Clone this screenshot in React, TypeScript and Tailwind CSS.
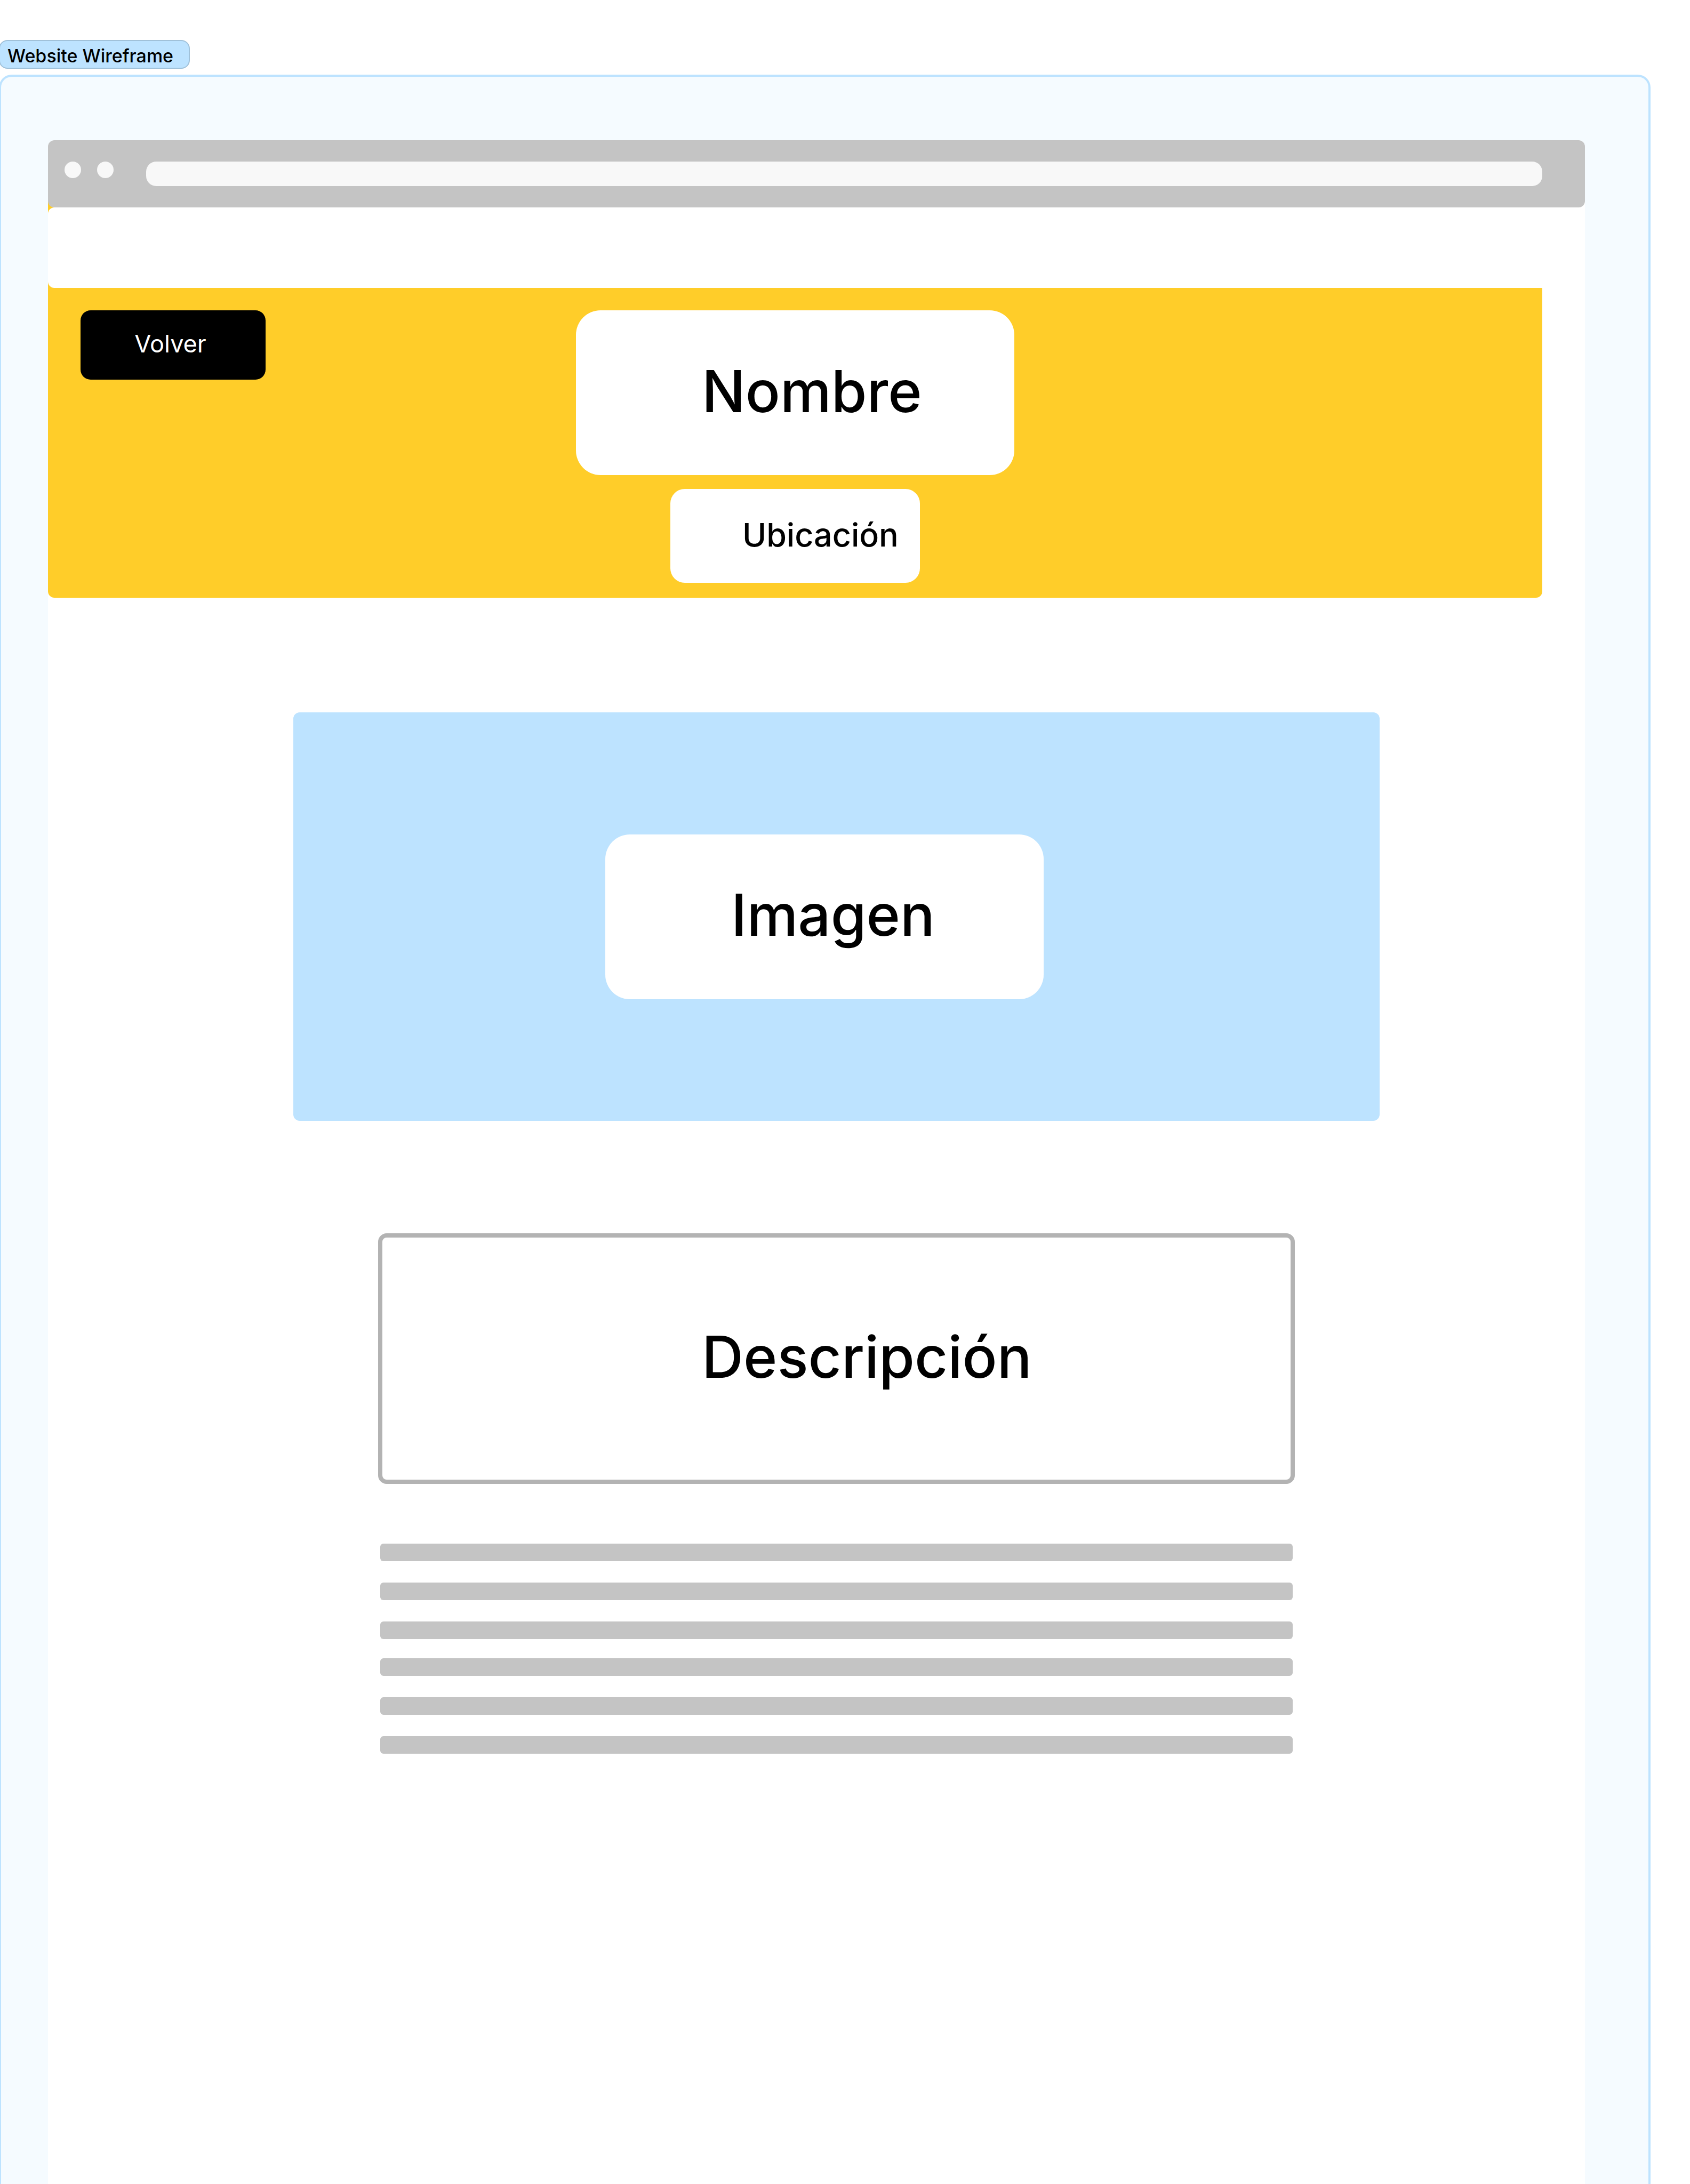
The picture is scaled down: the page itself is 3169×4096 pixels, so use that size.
const paragraphs = [
  [0, 1, 2],
  [3, 4, 5],
];

function BrowserBar() {
  return (
    <div className="relative z-10 flex h-[126px] items-start rounded-xl bg-[#c4c4c4] pt-10 pr-20 pl-[31px]">
      <span className="mr-[30px] size-[31px] shrink-0 rounded-full bg-[#f8f8f8]" />
      <span className="mr-[61px] size-[31px] shrink-0 rounded-full bg-[#f8f8f8]" />
      <input
        type="text"
        aria-label="Dirección"
        className="h-[46px] min-w-0 flex-1 rounded-[19px] bg-[#f8f8f8] px-6 text-2xl outline-none"
      />
    </div>
  );
}

function TitleCard({ children }: { children: string }) {
  return (
    <div className="flex h-[309px] w-[822px] items-center rounded-[46px] bg-white pb-1.5 pl-[236px]">
      <h2 className="text-[108px] leading-[132px] font-medium">{children}</h2>
    </div>
  );
}

function Hero() {
  return (
    <header className="-mt-3 mr-20 rounded-b-xl bg-[#ffcd29] pt-3">
      <div className="h-[151px] rounded-l-xl bg-white" />
      <div className="grid grid-cols-[1fr_auto_1fr] items-start px-[61px] pt-[42px] pb-7">
        <button
          type="button"
          className="flex h-[130px] w-[347px] items-center justify-center rounded-[19px] bg-black pr-2.5 pb-1 text-[45px] leading-[56px] text-white"
        >
          Volver
        </button>
        <div className="flex flex-col items-center gap-[26px]">
          <TitleCard>Nombre</TitleCard>
          <div className="flex h-[176px] w-[468px] items-center rounded-[27px] bg-white pb-1 pl-[135px]">
            <p className="text-[61px] leading-[76px] font-medium">Ubicación</p>
          </div>
        </div>
      </div>
    </header>
  );
}

export default function App() {
  return (
    <main className="flex min-h-screen flex-col overflow-x-hidden bg-white pt-[75px] font-['Inter',sans-serif] text-black">
      <div className="-ml-0.5 flex h-[54px] w-[358px] items-center rounded-2xl border-2 border-[#a0c1d9] bg-[#bde3ff] pt-1.5 pl-3.5">
        <h1 className="text-[34px] leading-[42px] font-medium whitespace-nowrap">Website Wireframe</h1>
      </div>

      <div className="mt-[11px] mr-[74px] -ml-0.5 flex flex-1 flex-col rounded-t-3xl border-4 border-b-0 border-[#bde3ff] bg-[#f5fbff] pt-[119px] pr-[119px] pl-[88px]">
        <div className="flex-1 rounded-t-xl bg-white">
          <BrowserBar />
          <Hero />

          <section className="mt-[215px] mr-[385px] ml-[460px] flex h-[766px] items-center rounded-xl bg-[#bde3ff] pl-[585px]">
            <TitleCard>Imagen</TitleCard>
          </section>

          <section className="mt-[211px] mr-[544px] ml-[619px]">
            <div className="flex h-[470px] items-center rounded-2xl border-8 border-[#b3b3b3] pb-1.5 pl-[599px]">
              <h2 className="text-[108px] leading-[132px] font-medium">Descripción</h2>
            </div>
            <div className="mx-1 mt-28 flex flex-col gap-9">
              {paragraphs.map((lines) => (
                <div key={lines[0]} className="flex flex-col gap-10">
                  {lines.map((line) => (
                    <div key={line} className="h-[33px] rounded-md bg-[#c4c4c4]" />
                  ))}
                </div>
              ))}
            </div>
          </section>
        </div>
      </div>
    </main>
  );
}
